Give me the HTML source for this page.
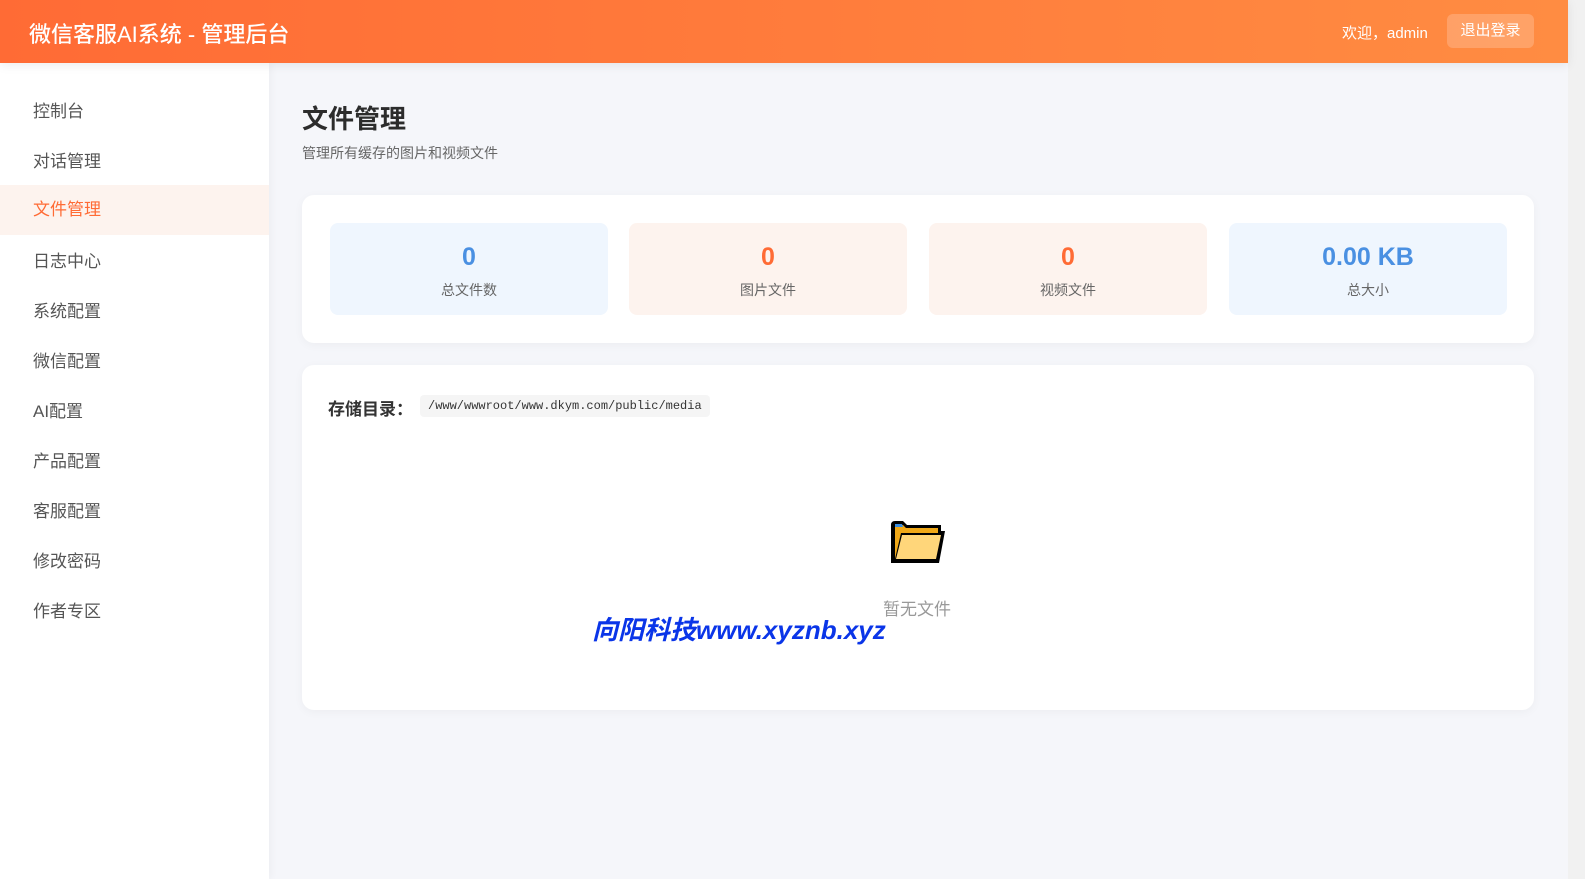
<!DOCTYPE html>
<html><head><meta charset="utf-8"><style>
*{margin:0;padding:0;box-sizing:border-box}
body{width:1585px;height:879px;overflow:hidden;background:#f5f6fa;font-family:"Liberation Sans","Noto Sans CJK SC",sans-serif;position:relative}
.hdr{position:absolute;left:0;top:0;width:1568px;height:63px;background:linear-gradient(90deg,#ff6b35,#ff8c42);box-shadow:0 2px 10px rgba(0,0,0,.08);z-index:2}
.hdr .t{position:absolute;left:29px;top:17px;color:#fff;font-size:22px;font-weight:500}
.hdr .w{position:absolute;left:1342px;top:22px;color:#fff;font-size:15px}
.hdr .b{position:absolute;left:1447px;top:14px;width:87px;height:34px;border-radius:6px;background:rgba(255,255,255,.2);color:#fff;font-size:15px;text-align:center;line-height:34px}
.sb{position:absolute;left:0;top:63px;width:269px;height:816px;background:#fff;box-shadow:2px 0 8px rgba(0,0,0,.04)}
.mi{position:absolute;left:0;width:269px;height:50px;line-height:50px;padding-left:33px;font-size:17px;color:#555}
.mi.a{background:#fdf3ee;color:#ff6b35}
.scr{position:absolute;left:1568px;top:0;width:17px;height:879px;background:#f1f1f1}
.h1{position:absolute;left:302px;top:99px;font-size:26px;font-weight:bold;color:#2c2c2c}
.sub{position:absolute;left:302px;top:143px;font-size:14px;color:#666}
.card{position:absolute;left:302px;width:1232px;background:#fff;border-radius:12px;box-shadow:0 2px 10px rgba(0,0,0,.04)}
.st{position:absolute;top:28px;width:278px;height:92px;border-radius:8px;text-align:center}
.st .n{font-size:25px;font-weight:bold;margin-top:19px;line-height:30px}
.st .l{font-size:14px;color:#666;margin-top:8px}
.bl{background:#eff6fe}.bl .n{color:#4a90e2}
.or{background:#fdf3ee}.or .n{color:#ff6b35}
</style></head><body>
<div class="hdr"><div class="t">微信客服AI系统 - 管理后台</div><div class="w">欢迎，admin</div><div class="b">退出登录</div></div>
<div class="sb">
<div class="mi" style="top:24px">控制台</div>
<div class="mi" style="top:74px">对话管理</div>
<div class="mi a" style="top:122px">文件管理</div>
<div class="mi" style="top:174px">日志中心</div>
<div class="mi" style="top:224px">系统配置</div>
<div class="mi" style="top:274px">微信配置</div>
<div class="mi" style="top:324px">AI配置</div>
<div class="mi" style="top:374px">产品配置</div>
<div class="mi" style="top:424px">客服配置</div>
<div class="mi" style="top:474px">修改密码</div>
<div class="mi" style="top:524px">作者专区</div>
</div>
<div class="scr"></div>
<div class="h1">文件管理</div>
<div class="sub">管理所有缓存的图片和视频文件</div>
<div class="card" style="top:195px;height:148px">
<div class="st bl" style="left:28px"><div class="n">0</div><div class="l">总文件数</div></div>
<div class="st or" style="left:327px"><div class="n">0</div><div class="l">图片文件</div></div>
<div class="st or" style="left:627px"><div class="n">0</div><div class="l">视频文件</div></div>
<div class="st bl" style="left:927px"><div class="n">0.00 KB</div><div class="l">总大小</div></div>
</div>
<div class="card" style="top:365px;height:345px">
<div style="position:absolute;left:26px;top:30px;font-size:17px;font-weight:bold;color:#333">存储目录：</div>
<div style="position:absolute;left:118px;top:30px;height:22px;padding:0 8px;background:#f5f5f5;border-radius:4px;font-family:'Liberation Mono',monospace;font-size:12px;line-height:22px;color:#333">/www/wwwroot/www.dkym.com/public/media</div>
<svg style="position:absolute;left:587px;top:154px" width="58" height="46" viewBox="0 0 58 46"><path d="M2 6 Q2 2 6 2 H14 L18 6 H52 V12 H56 L50 44 H2 Z" fill="#000"/><path d="M6 6 H14 L17 9 H49 V14 L12 14 L6 40 Z" fill="#f0a818"/><path d="M6 5 H13 L14 8 H6 Z" fill="#3a8ee0"/><path d="M13 16 H52 L47 40 H7 Z" fill="#ffd67a"/></svg>
<div style="position:absolute;left:581px;top:230px;font-size:17px;color:#999">暂无文件</div>
<div style="position:absolute;left:290px;top:245px;font-size:26px;font-style:italic;font-weight:600;color:#0a35e8">向阳科技www.xyznb.xyz</div>
</div>
</body></html>
